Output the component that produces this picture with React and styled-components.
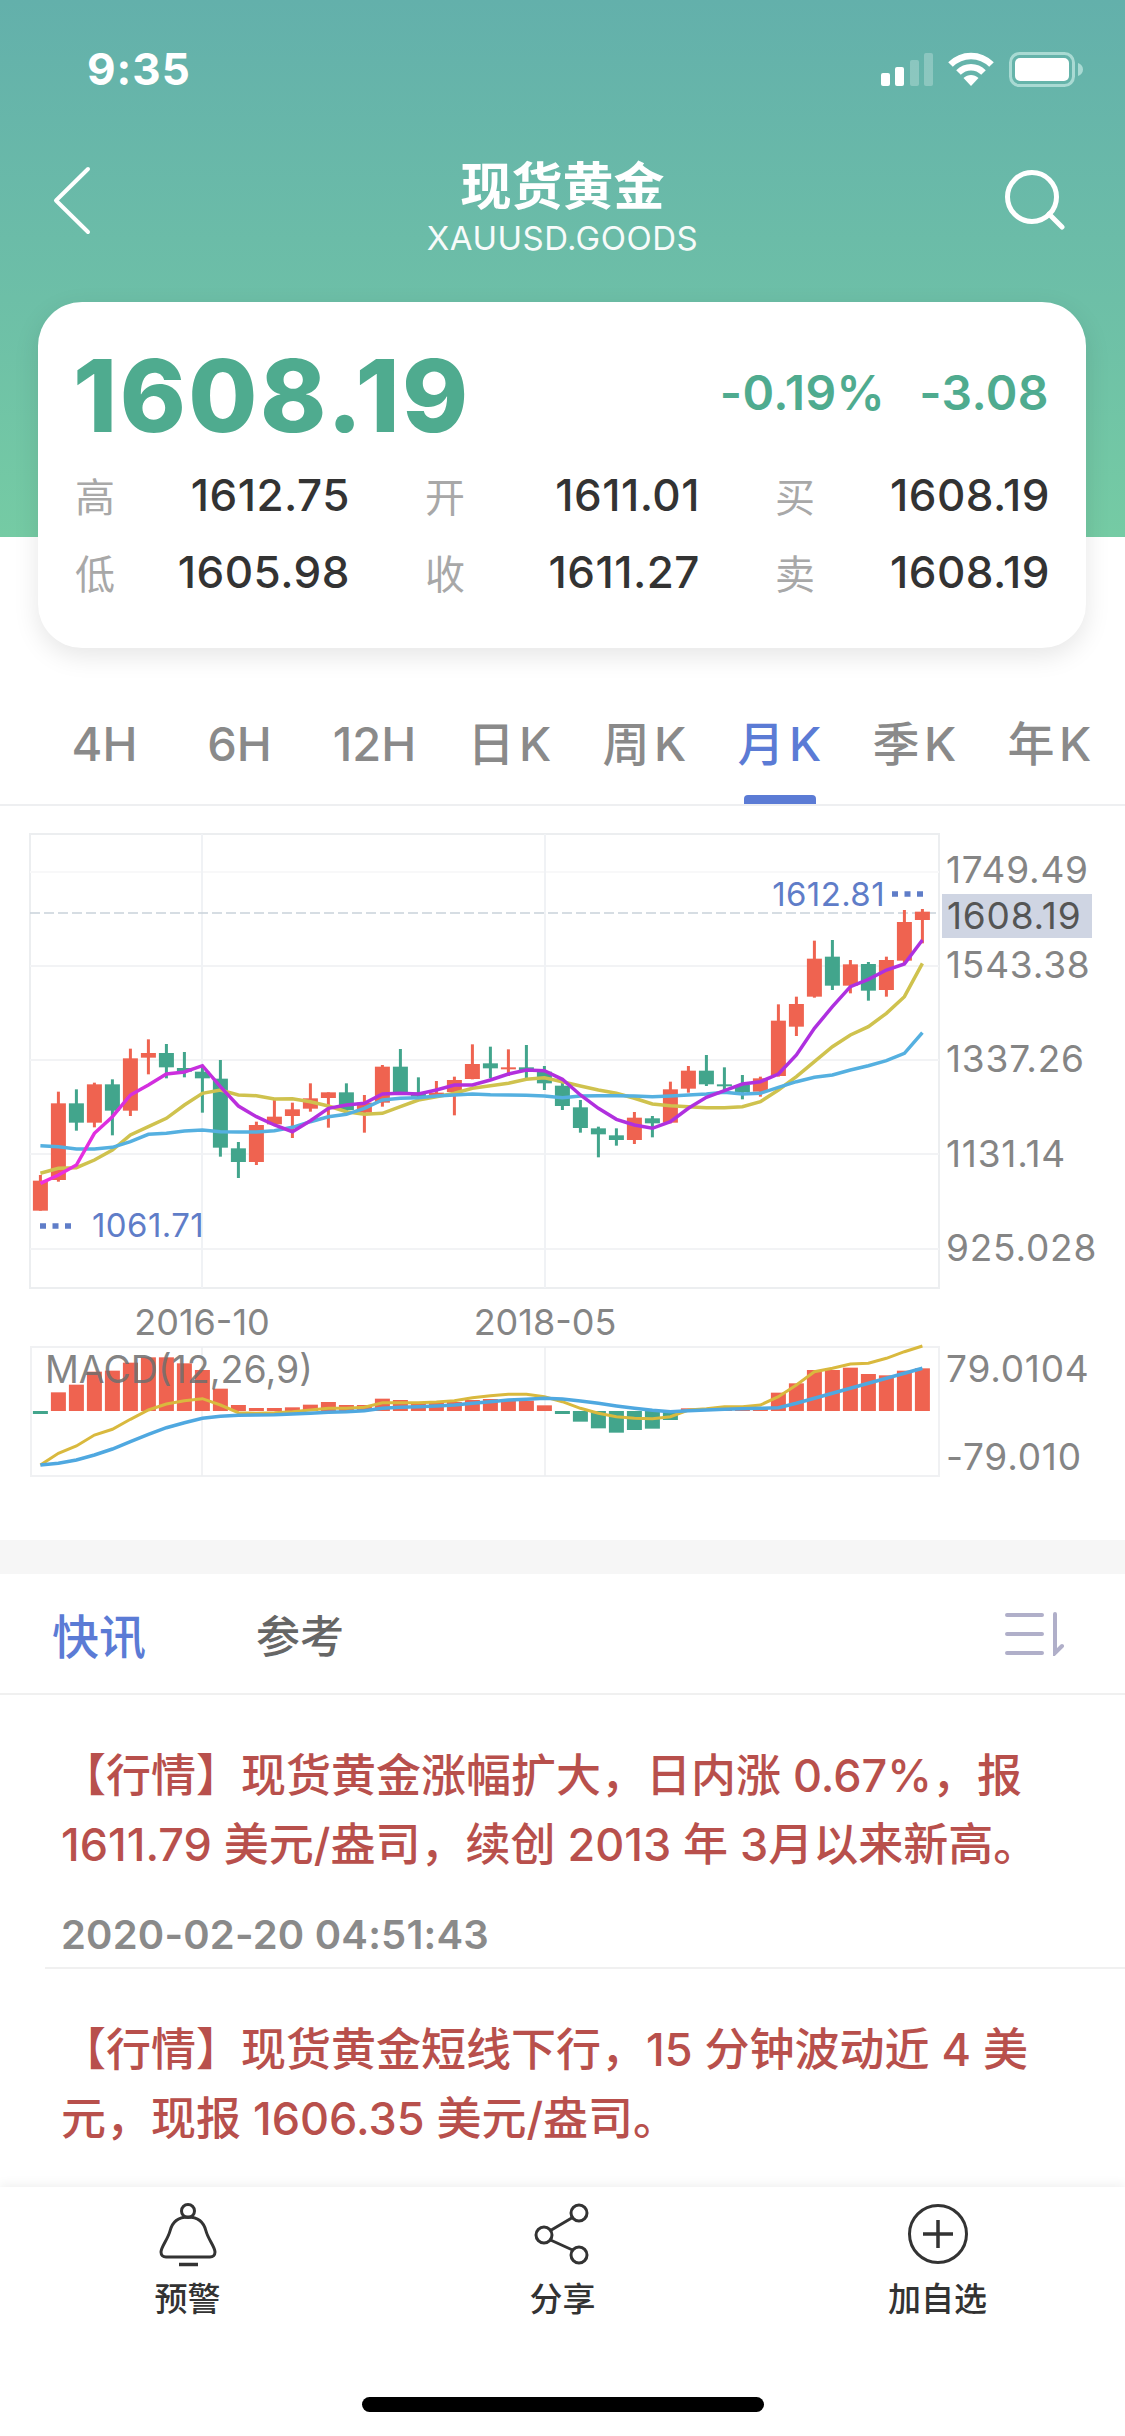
import React from "react";
import styled, { createGlobalStyle } from "styled-components";

const FONT = `Inter, "Noto Sans CJK SC", sans-serif`;
const BLUE = "#5b7bd5";
const RED = "#ef6350";
const GREEN = "#42a58c";

const GlobalStyle = createGlobalStyle`
  html, body {
    margin: 0;
    padding: 0;
    background: #fff;
  }
  * {
    box-sizing: border-box;
  }
`;

const Page = styled.div`
  position: relative;
  display: flex;
  flex-direction: column;
  width: 1125px;
  height: 2436px;
  overflow: hidden;
  background: #fff;
  font-family: ${FONT};
`;

const Hero = styled.header`
  height: 537px;
  background: linear-gradient(180deg, #63b0ab 0%, #75cba4 100%);
  color: #fff;
`;

const StatusBar = styled.div`
  display: flex;
  align-items: center;
  justify-content: space-between;
  height: 138px;
  padding: 0 42px 0 87px;
`;

const Time = styled.span`
  font-size: 44px;
  font-weight: 700;
  letter-spacing: 1px;
`;

const StatusIcons = styled.div`
  display: flex;
  align-items: center;
  gap: 15px;
`;

const NavBar = styled.nav`
  display: grid;
  grid-template-columns: 1fr auto 1fr;
  height: 164px;
`;

const BackButton = styled.svg`
  width: 39px;
  height: 69px;
  margin: 28px 0 0 52px;
`;

const SearchButton = styled.svg`
  justify-self: end;
  width: 62px;
  height: 60px;
  margin: 32px 60px 0 0;
`;

const TitleBlock = styled.div`
  display: flex;
  flex-direction: column;
  align-items: center;
  padding-top: 19px;
`;

const Title = styled.div`
  font-size: 51px;
  line-height: 60px;
  font-weight: 700;
`;

const Subtitle = styled.div`
  margin-top: 1px;
  font-size: 33px;
  line-height: 40px;
  letter-spacing: 0.5px;
  font-weight: 400;
  opacity: 0.95;
`;

const Card = styled.section`
  position: relative;
  height: 346px;
  margin: 0 39px 0 38px;
  padding: 44px 37px 0;
  border-radius: 44px;
  background: #fff;
  box-shadow: 0 8px 26px rgba(0, 0, 0, 0.1);
  color: #333;
`;

const PriceRow = styled.div`
  display: flex;
  align-items: center;
  justify-content: space-between;
  height: 100px;
  margin-bottom: 10px;
  color: #4fab8f;
`;

const Price = styled.div`
  font-size: 100px;
  font-weight: 800;
  line-height: 100px;
  letter-spacing: 2.5px;
  margin-left: -2px;
`;

const Changes = styled.div`
  display: flex;
  gap: 34px;
  padding-bottom: 8px;
  font-size: 48px;
  font-weight: 600;
  letter-spacing: 0.4px;
`;

const StatGrid = styled.div`
  display: grid;
  grid-template-columns: repeat(3, 275px);
  grid-auto-rows: 77px;
  column-gap: 75px;
`;

const Stat = styled.div`
  display: flex;
  align-items: center;
  justify-content: space-between;
`;

const StatLabel = styled.span`
  font-size: 40px;
  color: #a8a8a8;
`;

const StatValue = styled.span`
  font-size: 44px;
  font-weight: 500;
  letter-spacing: 0.5px;
`;

const Tabs = styled.div`
  display: grid;
  grid-template-columns: repeat(8, 135px);
  height: 158px;
  margin-top: 111px;
  padding: 66px 0 0 37px;
  border-bottom: 2px solid #eeeff1;
`;

const Tab = styled.div`
  position: relative;
  text-align: center;
  font-size: 47px;
  line-height: 60px;
  font-weight: 500;
  word-spacing: -8px;
  color: ${(p) => (p.$active ? BLUE : "#8a8a8a")};

  &::after {
    content: "";
    display: ${(p) => (p.$active ? "block" : "none")};
    position: absolute;
    left: 32px;
    bottom: 0;
    width: 72px;
    height: 9px;
    border-radius: 4px 4px 0 0;
    background: ${BLUE};
  }
`;

const ChartArea = styled.section`
  padding: 28px 0 0 30px;
`;

const ChartRow = styled.div`
  position: relative;
  display: flex;
`;

const Plot = styled.svg`
  display: block;
  flex: none;
  overflow: visible;
`;

const Axis = styled.div`
  display: flex;
  flex-direction: column;
  justify-content: space-between;
  width: 165px;
  margin-left: 6px;
  padding: ${(p) => p.$padding};
  font-size: 37px;
  line-height: 40px;
  letter-spacing: 0.8px;
  color: #858585;
`;

const PriceTag = styled.div`
  position: absolute;
  left: 912px;
  top: 60px;
  width: 150px;
  height: 44px;
  padding-left: 5px;
  background: #cfd5e3;
  font-size: 37px;
  line-height: 44px;
  letter-spacing: 0.8px;
  color: #555;
`;

const DateRow = styled.div`
  display: flex;
  gap: 143px;
  height: 59px;
  padding: 14px 0 0 72px;
`;

const DateLabel = styled.span`
  width: 200px;
  text-align: center;
  font-size: 36px;
  line-height: 40px;
  color: #858585;
`;

const MacdLabel = styled.div`
  position: absolute;
  left: 15px;
  top: 3px;
  font-size: 37.5px;
  line-height: 40px;
  color: rgba(110, 110, 110, 0.85);
`;

const Band = styled.div`
  height: 34px;
  margin-top: 63px;
  background: #f6f6f6;
`;

const NewsTabs = styled.div`
  display: flex;
  align-items: center;
  height: 121px;
  padding: 0 60px 0 52px;
  border-bottom: 2px solid #f0f0f0;
`;

const NewsTab = styled.span`
  width: 204px;
  font-size: ${(p) => (p.$active ? "47px" : "44px")};
  font-weight: 500;
  color: ${(p) => (p.$active ? BLUE : "#666")};
`;

const SortIcon = styled.svg`
  margin-left: auto;
  width: 60px;
  height: 44px;
`;

const NewsItem = styled.article`
  padding: 46px 0 7px;
  margin-left: 45px;
  border-bottom: ${(p) => (p.$last ? "none" : "2px solid #f0f0f0")};
`;

const NewsLine = styled.div`
  margin-left: 16px;
  font-size: 45px;
  line-height: 69px;
  font-weight: 500;
  color: #b8504c;
  white-space: nowrap;
`;

const NewsTime = styled.div`
  margin: 31px 0 0 16px;
  font-size: 40px;
  line-height: 50px;
  letter-spacing: 0.2px;
  font-weight: 600;
  color: #8a8a8a;
`;

const Footer = styled.footer`
  display: flex;
  flex-direction: column;
  align-items: center;
  height: 249px;
  margin-top: auto;
  padding-top: 16px;
  background: #fff;
  box-shadow: 0 -3px 10px rgba(0, 0, 0, 0.06);
`;

const ActionBar = styled.div`
  display: grid;
  grid-template-columns: repeat(3, 375px);
`;

const Action = styled.div`
  display: flex;
  flex-direction: column;
  align-items: center;
  font-size: 33px;
  line-height: 44px;
  font-weight: 500;
  color: #333;
`;

const ActionIcon = styled.svg`
  width: 64px;
  height: 64px;
  margin-bottom: 10px;
`;

const HomeBar = styled.div`
  width: 402px;
  height: 15px;
  margin-top: 76px;
  border-radius: 8px;
  background: #000;
`;

// candles: [wick top, body top, body bottom, wick bottom, up?]
const CANDLES = [
  [1125, 1142, 1232, 1232, 1], [875, 910, 1140, 1145, 1], [868, 910, 968, 992, 0], [848, 853, 968, 982, 1],
  [838, 853, 932, 1006, 0], [746, 775, 932, 948, 1], [718, 759, 773, 823, 1], [732, 759, 802, 835, 0],
  [756, 804, 815, 832, 0], [795, 815, 835, 938, 0], [780, 836, 1043, 1070, 0], [1026, 1045, 1086, 1134, 0],
  [965, 975, 1086, 1095, 1], [898, 950, 973, 975, 1], [908, 928, 948, 1014, 1], [850, 895, 926, 935, 1],
  [877, 877, 894, 983, 1], [850, 877, 930, 940, 0], [885, 908, 938, 998, 1], [795, 800, 908, 920, 1],
  [747, 800, 878, 885, 0], [832, 878, 890, 895, 0], [843, 878, 888, 890, 1], [830, 840, 876, 946, 1],
  [733, 792, 837, 838, 1], [740, 790, 805, 835, 0], [748, 802, 804, 828, 1], [735, 802, 812, 835, 0],
  [798, 815, 850, 870, 0], [835, 857, 918, 930, 0], [900, 922, 984, 998, 0], [980, 985, 1003, 1072, 0],
  [985, 1006, 1020, 1037, 0], [936, 953, 1020, 1032, 1], [948, 955, 970, 1012, 0], [845, 868, 968, 970, 1],
  [798, 812, 866, 878, 1], [765, 812, 853, 858, 0], [802, 853, 856, 875, 0], [825, 855, 876, 898, 0],
  [830, 835, 875, 890, 1], [613, 662, 828, 830, 1], [590, 612, 680, 708, 1], [422, 476, 590, 593, 1],
  [420, 470, 557, 570, 0], [480, 493, 557, 580, 1], [486, 492, 572, 602, 0], [470, 480, 570, 590, 1],
  [330, 366, 482, 490, 1], [327, 335, 360, 430, 1],
];

const MA_PURPLE = [
  1150, 1125, 1095, 1000, 950, 885, 855, 822, 816, 797, 860, 918, 950, 975, 995, 962, 925, 915, 910, 882, 880, 882,
  870, 855, 855, 840, 822, 810, 812, 838, 885, 925, 958, 975, 985, 965, 925, 892, 872, 852, 845, 822, 765, 685, 620,
  560, 538, 510, 492, 420,
];
const MA_YELLOW = [
  1120, 1105, 1103, 1080, 1050, 1005, 980, 955, 915, 880, 870, 885, 887, 897, 896, 905, 918, 935, 943, 940, 920, 900,
  890, 880, 865, 857, 850, 838, 833, 845, 858, 870, 880, 895, 912, 917, 920, 923, 923, 920, 905, 870, 830, 785, 740,
  705, 680, 640, 590, 490,
];
const MA_BLUE = [
  1037, 1040, 1047, 1047, 1042, 1025, 1003, 1000, 993, 990, 995, 996, 996, 992, 982, 965, 950, 943, 925, 900, 895, 893,
  888, 885, 882, 884, 885, 886, 888, 893, 888, 887, 887, 888, 890, 888, 885, 882, 877, 882, 880, 862, 845, 832, 825,
  810, 797, 782, 760, 698,
];

// histogram tops, 333 is the zero line
const MACD_BARS = [
  342, 277, 254, 215, 212, 188, 172, 172, 190, 210, 266, 315, 324, 324, 322, 314, 306, 315, 315, 296, 300, 306, 306,
  306, 300, 297, 298, 302, 316, 342, 365, 385, 398, 390, 386, 360, 325, 326, 326, 326, 326, 278, 250, 210, 210, 203,
  222, 226, 212, 205,
];
const MACD_YELLOW = [
  495, 460, 438, 405, 388, 358, 330, 312, 302, 296, 315, 338, 340, 338, 335, 330, 325, 325, 322, 308, 308, 308, 306,
  302, 293, 287, 283, 283, 290, 305, 325, 340, 350, 355, 356, 350, 330, 326, 320, 320, 315, 290, 255, 215, 205, 192,
  190, 175, 155, 138,
];
const MACD_BLUE = [
  495, 490, 480, 465, 447, 425, 403, 383, 368, 355, 349, 346, 345, 344, 342, 340, 337, 335, 332, 325, 322, 320, 318,
  315, 310, 305, 300, 298, 295, 297, 303, 310, 318, 325, 331, 335, 332, 330, 328, 326, 325, 323, 310, 295, 280, 265,
  250, 235, 220, 205,
];

const candleX = (i) => 40.4 + 18 * i;
const klineY = (v) => 800 + v / 3;
const macdY = (v) => 1300 + v / 3;
const toPoints = (values, toY) => values.map((v, i) => `${candleX(i)},${toY(v).toFixed(1)}`).join(" ");

const KlineChart = () => (
  <Plot width="910" height="454" viewBox="30 834 910 454">
    <defs>
      <linearGradient id="ma5" x1="0" x2="1" y1="0" y2="0">
        <stop offset="0" stopColor="#f02ee0" />
        <stop offset="0.25" stopColor="#b42fdc" />
        <stop offset="1" stopColor="#ad30e0" />
      </linearGradient>
    </defs>
    <rect x="30" y="834" width="909" height="454" fill="none" stroke="#eceef0" strokeWidth="2" />
    {[872, 966, 1060, 1154, 1249].map((y) => (
      <line key={y} x1="30" x2="939" y1={y} y2={y} stroke={y === 872 ? "#f8f8f9" : "#f2f3f5"} strokeWidth="2" />
    ))}
    {[202, 545].map((x) => (
      <line key={x} x1={x} x2={x} y1="834" y2="1288" stroke="#f0f2f5" strokeWidth="2" />
    ))}
    <line x1="30" x2="939" y1="913" y2="913" stroke="#c9d2da" strokeWidth="1.5" strokeDasharray="10 4" />
    {CANDLES.map(([wickTop, bodyTop, bodyBottom, wickBottom, up], i) => (
      <g key={i} fill={up ? RED : GREEN}>
        <rect x={candleX(i) - 1.5} y={klineY(wickTop)} width="3" height={(wickBottom - wickTop) / 3} />
        <rect x={candleX(i) - 7.5} y={klineY(bodyTop)} width="15" height={Math.max((bodyBottom - bodyTop) / 3, 2)} />
      </g>
    ))}
    <polyline points={toPoints(MA_YELLOW, klineY)} fill="none" stroke="#cfc24e" strokeWidth="3.5" />
    <polyline points={toPoints(MA_BLUE, klineY)} fill="none" stroke="#55b0e0" strokeWidth="3.5" />
    <polyline points={toPoints(MA_PURPLE, klineY)} fill="none" stroke="url(#ma5)" strokeWidth="3.5" />
    <line x1="40" x2="71" y1="1226" y2="1226" stroke="#5f7dc8" strokeWidth="5.5" strokeDasharray="6 6.5" />
    <text x="92" y="1237" fontSize="33" letterSpacing="0.4" fill="#5f7dc8">1061.71</text>
    <text x="885" y="906" fontSize="33" letterSpacing="0.4" fill="#5f7dc8" textAnchor="end">1612.81</text>
    <line x1="892" x2="923" y1="894" y2="894" stroke="#5f7dc8" strokeWidth="5.5" strokeDasharray="6 6.5" />
  </Plot>
);

const MacdChart = () => (
  <Plot width="910" height="130" viewBox="30 1347 910 130">
    <rect x="31" y="1347" width="908" height="129" fill="none" stroke="#f0f1f3" strokeWidth="2" />
    {[202, 545].map((x) => (
      <line key={x} x1={x} x2={x} y1="1347" y2="1476" stroke="#eceef1" strokeWidth="1.5" />
    ))}
    {MACD_BARS.map((top, i) => {
      const down = top > 333;
      return (
        <rect
          key={i}
          x={candleX(i) - 7.5}
          y={macdY(Math.min(top, 333))}
          width="15"
          height={Math.abs(top - 333) / 3}
          fill={down ? GREEN : RED}
        />
      );
    })}
    <polyline points={toPoints(MACD_YELLOW, macdY)} fill="none" stroke="#d9b93e" strokeWidth="3" />
    <polyline points={toPoints(MACD_BLUE, macdY)} fill="none" stroke="#4fa8e0" strokeWidth="3.5" />
  </Plot>
);

const SignalIcon = () => (
  <svg width="52" height="33" viewBox="0 0 52 33">
    <rect x="0" y="20" width="9" height="13" rx="2" fill="#fff" />
    <rect x="14" y="14" width="9" height="19" rx="2" fill="#fff" />
    <rect x="29" y="7" width="9" height="26" rx="2" fill="#fff" opacity="0.25" />
    <rect x="43" y="0" width="9" height="33" rx="2" fill="#fff" opacity="0.25" />
  </svg>
);

const WifiIcon = () => (
  <svg width="46" height="34" viewBox="0 0 46 34" fill="none" stroke="#fff" strokeWidth="6.5">
    <path d="M2.5 12.5C14 1 32 1 43.5 12.5" />
    <path d="M10.5 20.5C17.500 13.500 28.500 13.500 35.500 20.500" />
    <path d="M23 34L15.500 26C20 22 26 22 30.500 26Z" fill="#fff" stroke="none" />
  </svg>
);

const BatteryIcon = () => (
  <svg width="74" height="35" viewBox="0 0 74 35">
    <rect x="1.500" y="1.500" width="63" height="32" rx="9" fill="none" stroke="#a9dad3" strokeWidth="3" />
    <rect x="6" y="6" width="54" height="23" rx="5" fill="#fff" />
    <path d="M69 11c3 1 5 3.500 5 6.500s-2 5.500-5 6.500z" fill="#a9dad3" />
  </svg>
);

const STATS = [
  ["高", "1612.75"],
  ["开", "1611.01"],
  ["买", "1608.19"],
  ["低", "1605.98"],
  ["收", "1611.27"],
  ["卖", "1608.19"],
];

const TABS = ["4H", "6H", "12H", "日 K", "周 K", "月 K", "季 K", "年 K"];

const App = () => {
  return (
    <Page>
      <GlobalStyle />
      <Hero>
        <StatusBar>
          <Time>9:35</Time>
          <StatusIcons>
            <SignalIcon />
            <WifiIcon />
            <BatteryIcon />
          </StatusIcons>
        </StatusBar>
        <NavBar>
          <BackButton viewBox="0 0 39 69" fill="none" stroke="#fff" strokeWidth="4" strokeLinecap="round" strokeLinejoin="round">
            <path d="M36 3L4 34.500L36 66" />
          </BackButton>
          <TitleBlock>
            <Title>现货黄金</Title>
            <Subtitle>XAUUSD.GOODS</Subtitle>
          </TitleBlock>
          <SearchButton viewBox="0 0 62 60" fill="none" stroke="#fff" strokeWidth="5" strokeLinecap="round">
            <circle cx="29" cy="27" r="24.500" />
            <path d="M46 44L59 57" />
          </SearchButton>
        </NavBar>
        <Card>
          <PriceRow>
            <Price>1608.19</Price>
            <Changes>
              <span>-0.19%</span>
              <span>-3.08</span>
            </Changes>
          </PriceRow>
          <StatGrid>
            {STATS.map(([label, value]) => (
              <Stat key={label}>
                <StatLabel>{label}</StatLabel>
                <StatValue>{value}</StatValue>
              </Stat>
            ))}
          </StatGrid>
        </Card>
      </Hero>

      <Tabs>
        {TABS.map((tab) => (
          <Tab key={tab} $active={tab === "月 K"}>
            {tab}
          </Tab>
        ))}
      </Tabs>

      <ChartArea>
        <ChartRow>
          <KlineChart />
          <Axis $padding="16px 0 20px">
            <span>1749.49</span>
            <span>1543.38</span>
            <span>1337.26</span>
            <span>1131.14</span>
            <span>925.028</span>
          </Axis>
          <PriceTag>1608.19</PriceTag>
        </ChartRow>
        <DateRow>
          <DateLabel>2016-10</DateLabel>
          <DateLabel>2018-05</DateLabel>
        </DateRow>
        <ChartRow>
          <MacdChart />
          <Axis $padding="2px 0 0">
            <span>79.0104</span>
            <span>-79.010</span>
          </Axis>
          <MacdLabel>MACD(12,26,9)</MacdLabel>
        </ChartRow>
      </ChartArea>

      <Band />

      <NewsTabs>
        <NewsTab $active>快讯</NewsTab>
        <NewsTab>参考</NewsTab>
        <SortIcon viewBox="0 0 60 44" fill="none" stroke="#b0afc9" strokeWidth="4" strokeLinecap="round">
          <path d="M2 3H37M2 22H37M2 41H37" />
          <path d="M50 2V41L57 34" />
        </SortIcon>
      </NewsTabs>

      <NewsItem>
        <NewsLine>【行情】现货黄金涨幅扩大，日内涨 0.67%，报</NewsLine>
        <NewsLine>1611.79 美元/盎司，续创 2013 年 3月以来新高。</NewsLine>
        <NewsTime>2020-02-20 04:51:43</NewsTime>
      </NewsItem>
      <NewsItem $last>
        <NewsLine>【行情】现货黄金短线下行，15 分钟波动近 4 美</NewsLine>
        <NewsLine>元，现报 1606.35 美元/盎司。</NewsLine>
      </NewsItem>

      <Footer>
        <ActionBar>
          <Action>
            <ActionIcon viewBox="0 0 64 64" fill="none" stroke="#333" strokeWidth="3">
              <circle cx="32" cy="8" r="6.500" />
              <path d="M32 14C21 14 16 20 14 28C12 36 5 44 5 49C5 52 7 54 10 54H54C57 54 59 52 59 49C59 44 52 36 50 28C48 20 43 14 32 14Z" />
              <path d="M23 61.500H42" strokeWidth="3.500" />
            </ActionIcon>
            预警
          </Action>
          <Action>
            <ActionIcon viewBox="0 0 64 64" fill="none" stroke="#333" strokeWidth="3">
              <circle cx="48" cy="10" r="8" />
              <circle cx="13" cy="32" r="8" />
              <circle cx="48" cy="52" r="8" />
              <path d="M19.500 27.500L41.500 14.500M19.500 37L41.500 47" />
            </ActionIcon>
            分享
          </Action>
          <Action>
            <ActionIcon viewBox="0 0 64 64" fill="none" stroke="#333" strokeWidth="3">
              <circle cx="32" cy="31" r="28.500" />
              <path d="M17 31H47M32 17V45" strokeWidth="3.500" />
            </ActionIcon>
            加自选
          </Action>
        </ActionBar>
        <HomeBar />
      </Footer>
    </Page>
  );
};

export default App;
